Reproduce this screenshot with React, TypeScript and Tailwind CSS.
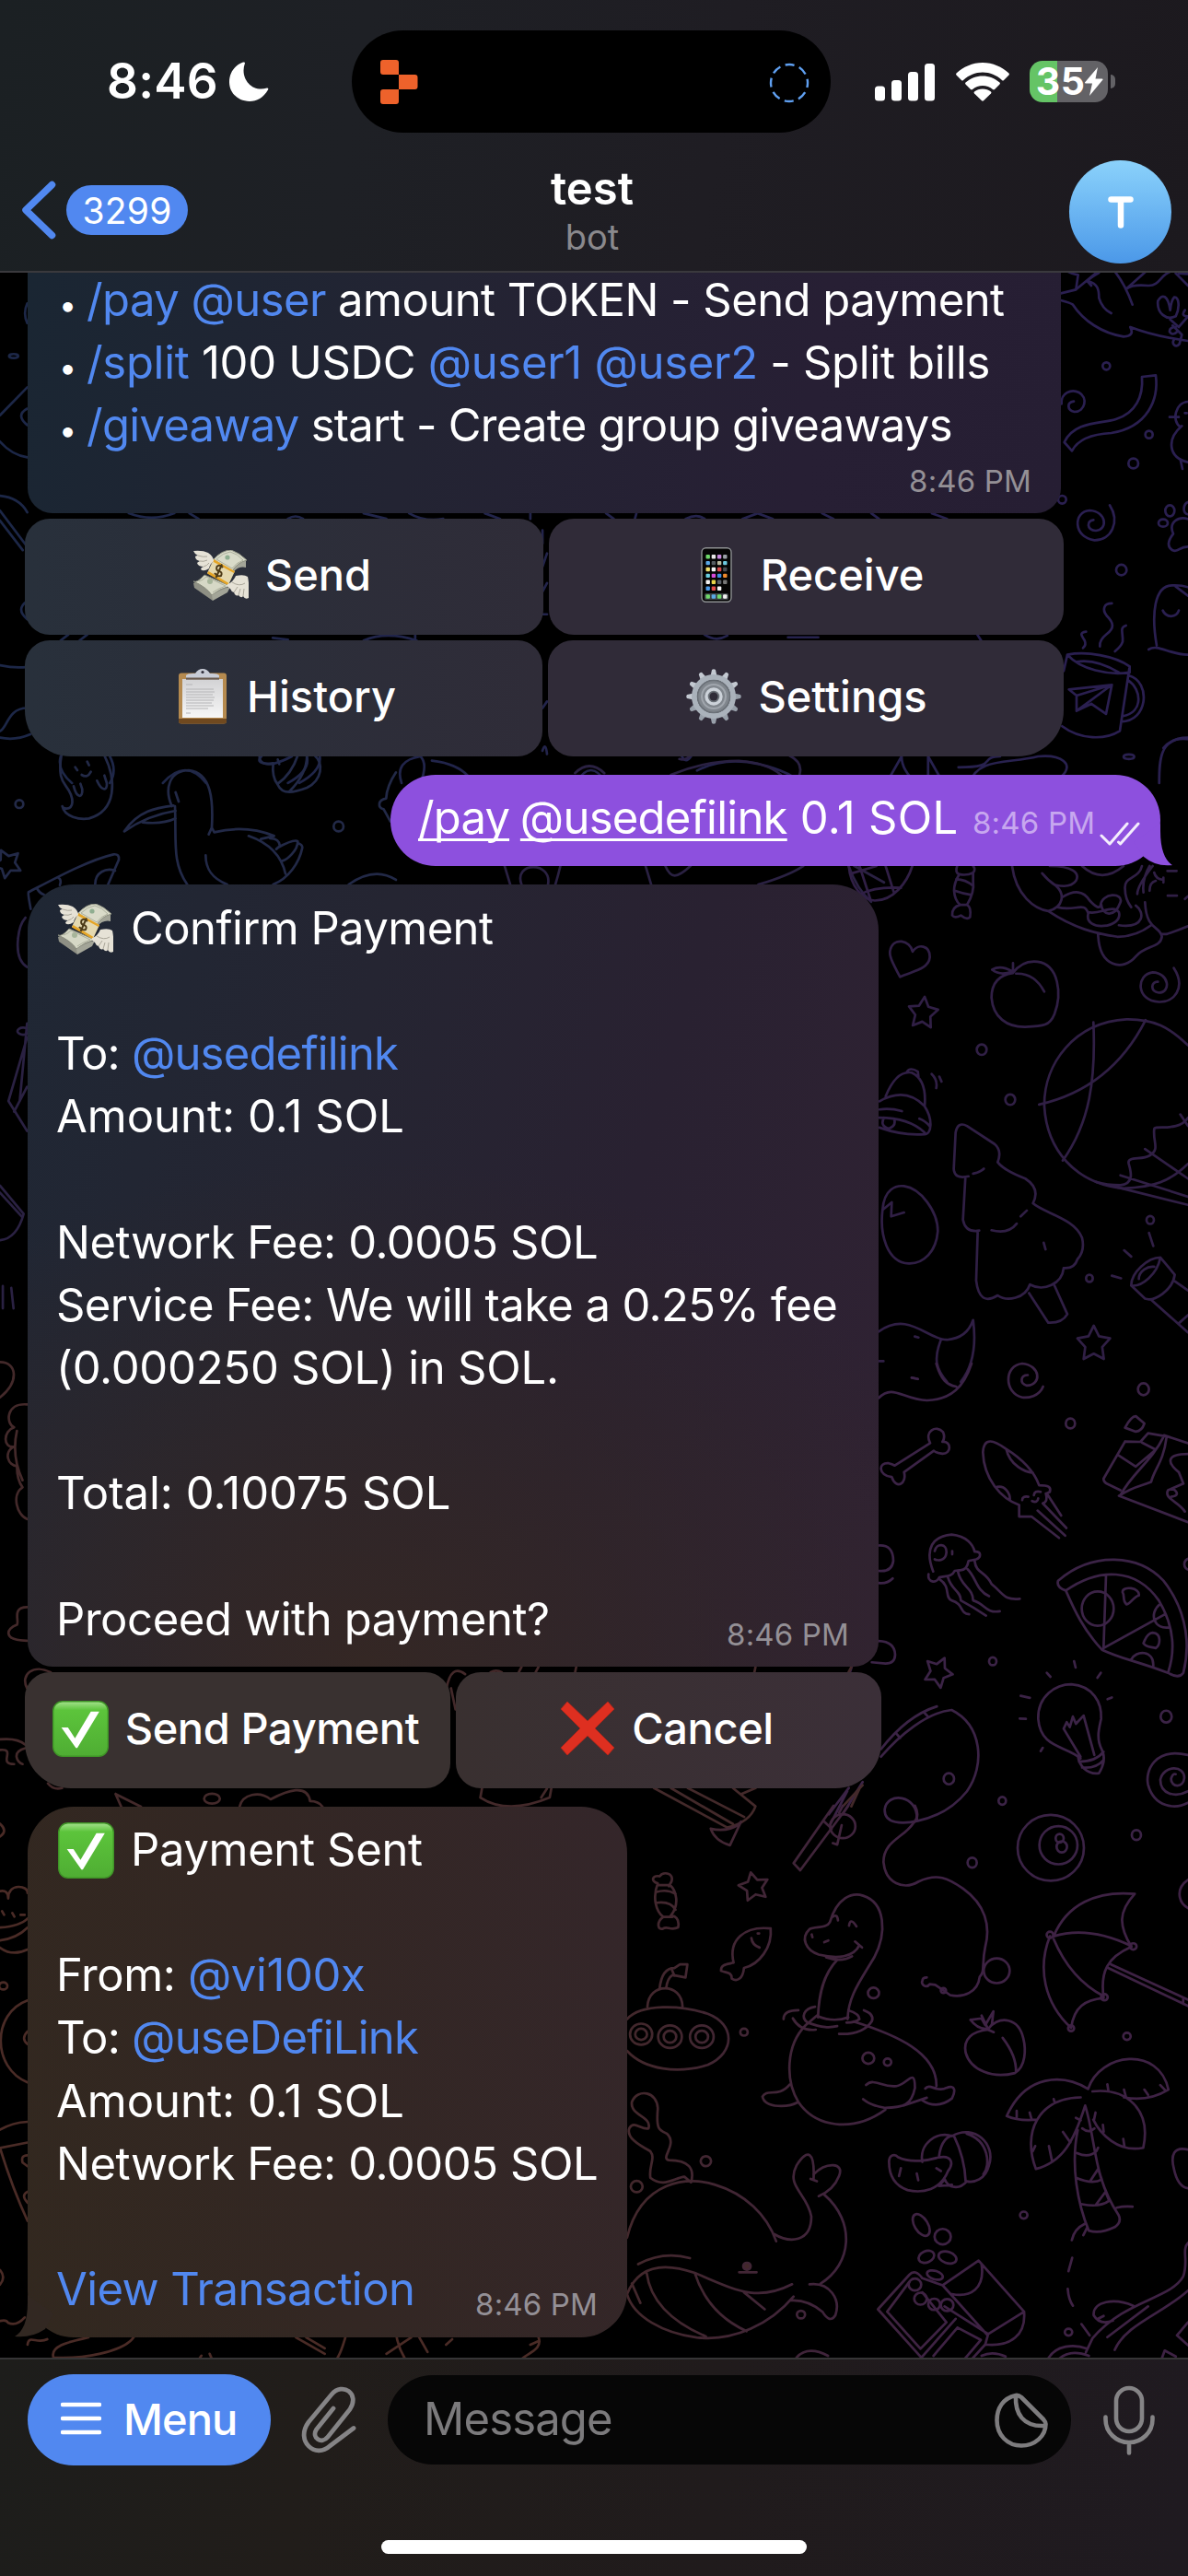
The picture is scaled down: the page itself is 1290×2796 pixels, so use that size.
import type { ReactNode } from 'react';

/* ---------- wallpaper ---------- */

function Star({ x, y, r = 50, turn = 0 }: { x: number; y: number; r?: number; turn?: number }) {
  const points = Array.from({ length: 10 }, (_, i) => {
    const a = ((i * 36 - 90 + turn) * Math.PI) / 180;
    const d = i % 2 ? r * 0.52 : r;
    return `${(x + Math.cos(a) * d).toFixed(1)},${(y + Math.sin(a) * d).toFixed(1)}`;
  });
  return <polygon points={points.join(' ')} />;
}

function Dots({ at }: { at: [number, number, number][] }) {
  return (
    <>
      {at.map(([x, y, r]) => (
        <circle key={`${x}-${y}`} cx={x} cy={y} r={r} />
      ))}
    </>
  );
}

function Wallpaper() {
  return (
    <svg
      className="absolute inset-0 h-full w-full [&_*]:[vector-effect:non-scaling-stroke]"
      viewBox="0 296 1290 2263"
      fill="none"
      strokeWidth="2.7"
      strokeLinecap="round"
      strokeLinejoin="round"
      aria-hidden="true"
    >
      <defs>
        <linearGradient id="warm" gradientUnits="userSpaceOnUse" x1="0" y1="0" x2="900" y2="0">
          <stop offset="0" stopColor="#43282a" />
          <stop offset="1" stopColor="#3e2244" />
        </linearGradient>
        <linearGradient id="cool" gradientUnits="userSpaceOnUse" x1="0" y1="0" x2="1568" y2="0">
          <stop offset="0" stopColor="#1c2747" />
          <stop offset="1" stopColor="#2a2050" />
        </linearGradient>
      </defs>

      {/* top right: leaves, ribbon, spiral, mug */}
      <g transform="translate(1130 290) scale(.3333)" stroke="#2a1f50">
        <path d="M66 85L115 73L185 15M85 12Q100 22 122 25L115 73M155 45C185 55 190 70 190 100Q200 135 230 150M240 12Q275 55 299 122M345 12L280 70Q300 55 350 60C390 62 390 20 430 12M440 20L480 60M450 20L480 22M66 108Q95 115 105 122C140 175 200 215 270 226C300 225 300 210 292 195Q370 225 480 240M190 18Q160 35 152 45L165 60" />
        <path d="M422 140C415 90 395 85 382 110C378 150 410 175 440 160C455 130 450 95 435 98Q425 110 422 140M422 170L450 195L480 160M470 140Q455 160 480 160M440 195Q420 195 420 210Q430 225 445 210M435 235C425 250 440 265 452 250L460 220L430 190" />
        <path d="M330 357L375 352C385 430 350 520 230 540Q130 545 102 598L77 570C110 500 200 510 245 495C310 475 335 420 330 357Z" />
        <path d="M68 445C65 410 100 395 125 408C155 425 145 470 110 471C85 465 85 440 108 437" />
        <path d="M225 775C260 830 230 890 175 889C105 880 105 795 160 792C215 795 220 855 180 858C148 855 150 825 172 823" />
        <path d="M455 520C425 500 440 440 480 438M460 517C410 560 415 620 480 635M420 488H450M455 625L462 657M470 475H476" />
        <path d="M480 910C450 910 450 930 430 922C410 910 415 890 432 868C415 830 450 810 480 820M480 805C460 800 465 770 480 765" />
        <ellipse cx="421" cy="793" rx="15" ry="18" />
        <ellipse cx="399" cy="833" rx="15" ry="12" />
        <path d="M378 1232C360 1130 370 1035 430 1036Q460 1035 480 1042M440 1040L480 1070M352 1245C380 1225 420 1262 480 1262M398 1118Q405 1135 425 1137Q445 1135 450 1118" />
        <path d="M232 1095C205 1095 200 1115 215 1135C240 1160 240 1175 215 1195Q190 1215 193 1235M278 1167C255 1175 270 1190 267 1220Q262 1235 242 1251M148 1187C125 1190 133 1200 143 1215Q150 1230 138 1240" />
        <path d="M87 1262C150 1250 240 1265 290 1300L258 1510C210 1540 130 1540 70 1495M87 1262L75 1315M87 1262C130 1310 220 1330 288 1320M118 1285Q180 1275 255 1320M290 1300V1320M288 1330C360 1350 350 1480 262 1480M285 1345C330 1375 335 1450 268 1462" />
        <path d="M92 1375L232 1360L213 1455L165 1422L117 1445V1395ZM117 1395L232 1360L117 1445L165 1422" />
        <path d="M400 1566Q430 1530 480 1537" />
        <Dots at={[[214, 322, 12], [353, 545, 12], [302, 639, 16], [263, 986, 17], [70, 757, 13]]} />
      </g>

      {/* cool left side, visible around the first bubble and its buttons */}
      <g transform="translate(0 290) scale(.8227 .3571)" stroke="url(#cool)">
        <path d="M36 365L0 450M36 430Q20 450 36 480M0 530Q15 570 36 578M0 695Q25 700 36 745M0 740L36 850M0 770L30 860M36 1015Q20 1040 36 1070M0 1210Q20 1220 36 1215M36 1340C10 1340 10 1400 0 1410M0 1430Q20 1440 40 1420M36 110Q30 140 36 170" />
        <path d="M170 748Q200 775 230 748M250 748L262 765M380 765Q390 750 400 765M480 748L510 765M540 748Q560 775 585 765M640 748L660 765M700 748V765M800 748L810 765M840 748L838 765M905 765Q920 748 930 765M980 765L1000 748L1020 765M1085 748L1100 765M1150 748L1160 765M1230 748L1250 765" />
        <path d="M80 1135L90 1117M105 1135L115 1117M360 1127L380 1132M480 1135Q510 1105 550 1135M548 1117V1135M930 1117Q945 1140 960 1120M1040 1125H1080M1290 1117L1295 1135M716 800V840M716 910L722 870M715 990L722 960M716 1055H722M716 1340L722 1320M716 1470Q720 1440 722 1480" />
        <path d="M80 1487Q75 1530 95 1568M145 1487Q155 1530 145 1568M215 1568Q245 1490 272 1568M345 1487Q335 1510 360 1510Q375 1500 385 1487M380 1568Q410 1530 405 1487M422 1487Q425 1530 395 1568M530 1568Q520 1500 555 1487Q565 1510 555 1568M570 1500Q610 1510 625 1568M760 1568Q780 1490 800 1568M900 1487Q905 1510 912 1487M920 1530Q970 1470 1040 1540L1060 1568M1170 1568L1190 1487Q1190 1530 1210 1568M1225 1568V1487L1245 1568M1265 1520C1320 1520 1290 1490 1320 1487M1280 1568C1290 1490 1330 1510 1370 1487C1400 1480 1420 1510 1400 1550M1568 1430C1530 1430 1530 1500 1530 1568" />
        <Dots at={[[18, 270, 6], [1490, 1488, 7]]} />
      </g>

      {/* pelican, ghost, pizza slice */}
      <g transform="translate(0 820) scale(.3333)" stroke="#222947">
        <path d="M200 0C190 60 200 80 215 100C245 140 240 175 215 173Q203 170 203 165C210 200 260 210 290 205C380 180 380 80 340 0M245 38L252 48M284 20L290 32M266 63Q285 75 296 53M240 100C250 140 270 140 268 110L262 92M316 82C330 115 350 118 348 90L340 65" />
        <path d="M560 165C535 110 550 50 615 48C690 55 695 150 690 235L680 257M690 235L698 250Q800 225 893 262L850 272M570 165C575 280 560 350 610 420M405 247C450 180 510 170 565 163M405 247Q480 195 572 180M465 218Q530 225 572 205M572 120L582 150M670 325C670 370 690 400 740 420M810 262C890 290 920 340 930 385M880 270Q910 270 912 295L900 305M905 300Q960 270 970 280C970 310 935 340 920 343M970 285Q985 290 985 300C975 350 940 400 890 420" />
        <path d="M845 0C845 30 870 30 890 25Q885 70 905 95C920 130 960 120 1000 105C1050 80 1055 25 1025 0M905 92Q950 60 970 0M943 117Q1000 60 1000 0M905 13L910 28M930 0H938" />
        <path d="M100 500C95 470 90 450 93 445C180 400 290 340 370 322Q390 320 387 340L352 420M120 432Q130 450 143 453M190 398Q202 405 195 422M310 420C310 380 345 365 375 375" />
        <path d="M1136 420Q1220 360 1290 405M1290 55Q1260 100 1258 140C1230 145 1230 170 1250 175L1272 215" />
        <Star x={24} y={352} r={48} turn={-170} />
        <Dots at={[[63, 158, 13], [1103, 231, 16]]} />
      </g>

      {/* between the outgoing and the confirm bubble */}
      <g transform="translate(0 820) scale(.6122 .3827)" stroke="#2a2142">
        <path d="M895 313L905 366M994 313Q990 340 985 366M925 366C910 300 980 300 972 366M1145 313L1155 366M1180 313C1190 350 1200 350 1225 313M1345 366Q1400 340 1425 313M1505 313Q1520 380 1545 415M1515 313L1568 360M1020 50Q1045 10 1072 50M1190 55Q1250 15 1310 15Q1360 20 1385 55M1400 0Q1425 20 1418 55M1205 10Q1215 15 1225 0M48 600Q28 580 32 520Q34 480 45 460M48 800L15 980L48 1065M48 760L35 980M25 1010L48 940M0 1220L42 1300Q30 1370 0 1375M0 1240L40 1310M5 1505V1568M20 1510L24 1568" />
        <Dots at={[[41, 782, 10]]} />
      </g>

      {/* heart, peach, ball, tree, flashlight */}
      <g transform="translate(900 940) scale(.3333 .3571)" stroke="#301f45">
        <path d="M65 0C70 60 110 105 150 105C210 105 255 50 272 0M75 22Q120 10 155 0M100 0L135 100M185 0L212 80M105 85Q150 62 235 66" />
        <path d="M418 0Q410 20 425 25Q408 50 408 75Q410 105 428 118Q400 125 402 150Q410 160 430 150Q450 165 460 155Q465 125 450 118Q475 80 470 45Q470 30 470 20Q480 10 470 0M425 25Q450 30 470 20M415 40Q445 40 470 60M410 75Q440 85 465 88M428 118H450" />
        <path d="M232 337C205 290 195 270 200 255C210 215 265 225 273 260C290 235 330 240 329 277C325 315 270 320 232 337Z" />
        <path d="M600 325C560 330 530 350 530 400C535 460 580 490 640 489C700 487 720 485 735 450C760 390 750 300 680 291C645 287 620 300 600 325M532 315Q560 300 597 320Q560 335 532 315M600 295V325M610 327Q670 325 702 382" />
        <path d="M597 0C610 90 670 130 715 137C765 125 770 85 740 60Q715 45 695 22M720 0C790 0 820 20 805 45C790 65 760 62 740 58M745 125C800 140 835 105 845 145C830 200 960 190 945 140C925 115 880 150 845 140M715 137C800 190 870 205 940 215Q1000 215 1050 180M760 95Q820 60 850 105Q880 135 885 120C890 80 960 80 950 110C930 160 890 150 887 115M825 0Q890 55 960 0M1020 0C1010 40 960 30 965 70Q965 100 985 125M1000 120C1030 140 1030 190 945 180M877 205C880 310 960 320 1000 275C1030 240 1080 250 1085 215C1080 180 1035 200 1030 110M1055 0Q1005 60 1005 85M1025 80Q1020 40 1045 0M1100 207Q1140 195 1170 183M1085 207H1100M1060 20Q1065 40 1090 42M1090 35V50M1045 75Q1045 50 1065 45M1103 15H1133M1104 90H1134M1160 100L1170 92" />
        <path d="M1124 310C1165 370 1125 415 1075 413C1000 410 1000 330 1055 323C1110 325 1115 385 1075 385C1045 380 1050 350 1072 352" />
        <path d="M1170 545C1110 490 1060 465 970 466C800 475 700 600 702 730C710 860 800 965 960 980C1060 975 1110 960 1170 905M862 475C870 650 850 780 762 895M1032 468C960 600 850 690 685 725" />
        <path d="M1170 765C1140 810 1060 785 1060 800C1055 840 1080 860 1045 880C1020 895 970 880 977 905C985 930 995 965 950 970Q905 970 870 960L1170 1030M950 940L1170 1005M1030 860L1170 950M1145 755L1170 790" />
        <path d="M165 715Q250 670 312 730C340 770 335 815 312 815Q240 820 165 795M185 700Q220 620 270 628Q320 650 312 730M255 625Q265 610 290 625L292 640M165 740Q200 735 238 745M165 765Q260 765 312 810M295 768Q315 775 328 790M180 765Q165 790 195 798Q220 790 213 770M335 632Q355 650 350 675M360 640L367 655" />
        <path d="M175 1045C180 980 220 970 245 973C300 980 355 1050 355 1110C350 1170 310 1210 260 1208C190 1205 165 1120 175 1045L205 1022L203 1065L245 1053" />
        <path d="M455 943C420 950 408 940 407 920L413 810Q420 775 450 790L540 845Q565 865 550 900Q570 925 640 950Q690 980 665 1025C700 1055 800 1070 825 1130Q835 1170 810 1195Q800 1225 765 1222C760 1270 700 1295 655 1272C640 1315 580 1325 550 1305Q490 1340 480 1260L485 1110M445 945L437 1075Q445 1115 490 1108M530 1107Q585 1120 612 1087M625 1065L645 1047M470 935Q495 930 505 920M652 1298L715 1388Q760 1390 777 1362L735 1275M700 1145L706 1165" />
        <path d="M162 1415C260 1350 320 1440 385 1440Q450 1435 470 1380C480 1450 470 1520 430 1568M365 1440C340 1500 350 1530 385 1568M280 1430L292 1433M165 1505H178M270 1555L290 1559" />
        <path d="M985 1275C985 1235 1040 1190 1080 1190L1127 1242C1120 1290 1060 1325 1030 1315ZM1080 1190C1070 1240 1020 1280 985 1275M1010 1255C1010 1230 1040 1215 1060 1218M1050 1318L1170 1418M1127 1262L1170 1290M1140 1390L1170 1365M1043 1115L1057 1155M962 1168L985 1187M922 1245L952 1253" />
        <Star x={307} y={447} turn={6} />
        <Star x={863} y={1453} r={56} />
        <Dots at={[[498, 558, 16], [591, 710, 16], [1047, 1076, 12], [849, 1253, 11]]} />
      </g>

      {/* bone, squid, chocolate, jellyfish, pizza, bulb, billiard ball */}
      <g transform="translate(900 1480) scale(.3333 .3571)" stroke="#3b2346">
        <path d="M162 105C210 60 240 110 320 112C400 110 440 70 465 0M350 0C365 50 385 65 415 70M270 43L290 47" />
        <path d="M698 70C685 100 650 105 630 103C570 90 570 5 630 0C690 5 695 65 645 67C620 60 625 35 648 35" />
        <path d="M215 310L330 242C310 205 350 185 372 208Q380 225 370 238C400 235 400 275 370 274Q350 272 342 265L245 330C255 365 220 385 205 345C160 340 160 300 195 303Q205 305 215 310Z" />
        <path d="M502 270C505 220 540 235 575 258C630 290 670 330 685 370C715 370 725 375 720 390L710 395L757 462M502 270C505 350 560 410 620 430V465H660L750 530M680 447L770 523M697 425L774 500M707 395Q715 420 697 425M578 260C590 310 640 330 665 332M548 375C575 370 590 395 590 412M630 415Q630 402 650 405M668 400Q670 385 690 390M662 418Q680 425 682 410" />
        <path d="M965 237L895 350Q895 360 905 365L950 385M965 237L1015 238L1040 212L1092 220M945 280L1000 313L1065 262L1020 240M1092 220C1050 300 990 330 950 400M1100 225C1090 300 1060 320 1050 360C1010 375 1000 370 945 402L1170 482M1092 218L1170 242M1170 275C1100 275 1100 300 1140 330L1155 365L1105 385C1090 410 1140 420 1160 450M1120 380Q1150 400 1115 405M965 195Q985 160 1000 160L1028 182Q1020 205 1000 207Z" />
        <path d="M340 632C310 560 340 525 400 520C450 525 470 550 475 572C500 570 495 590 480 595L455 600Q450 630 425 628L410 630C400 650 380 645 360 650C350 670 320 665 325 640M345 570C350 545 385 545 383 575C380 600 355 600 345 595M402 570V580M360 655C400 680 375 710 400 720C440 730 425 760 457 762M388 650C400 690 430 690 430 720Q470 740 512 766M420 630C430 680 470 680 470 720C510 730 510 760 557 753M452 625C480 650 480 690 522 707M475 600C480 640 510 630 530 670C570 700 570 720 622 715" />
        <path d="M747 660C860 570 1010 580 1090 660C1150 730 1185 830 1155 940Q1140 960 1105 940C990 900 960 900 890 870C830 810 800 750 772 690Q740 680 747 660ZM772 690C880 620 1000 620 1075 720Q1145 830 1105 940M903 645L895 865L1095 762M1080 730C1040 760 1060 810 1110 802M985 900C1000 870 1060 870 1057 920M957 695C955 675 1015 680 1010 705C990 710 985 730 970 732C955 720 965 705 957 695M1025 850C1030 840 1035 820 1055 818C1085 820 1080 855 1065 865C1050 860 1035 865 1025 850" />
        <circle cx="876" cy="745" r="52" />
        <path d="M820 1200C770 1160 690 1170 682 1080C680 1010 740 975 790 975C860 980 890 1030 887 1080C880 1110 870 1140 890 1175C905 1205 890 1230 880 1245C840 1250 815 1220 812 1195M765 1110L820 1195M765 1110L775 1090L785 1105L795 1073L805 1095L830 1070L865 1190M815 1210Q870 1210 895 1180M825 1228Q870 1232 895 1205M625 1010L655 1016M622 1079L642 1080M710 940L722 952M799 905L804 924M886 940L875 955M908 1020L922 1015M697 1168L690 1178" />
        <path d="M162 553Q210 550 210 600Q205 635 162 630M162 667Q190 670 208 653M162 843Q215 845 216 885Q215 912 185 912L140 908M70 935L75 920" />
        <path d="M170 1172C230 1100 290 1060 352 1042M170 1195C230 1130 320 1060 400 1053C500 1100 510 1220 450 1300Q390 1370 290 1390C240 1400 180 1400 182 1355C190 1300 290 1310 287 1385M310 1060L322 1072M220 1125L232 1138M65 1290L0 1370M110 1272L45 1370M60 1300L5 1400" />
        <path d="M1170 1190C1060 1165 1030 1240 1040 1280C1060 1350 1130 1355 1170 1335M1170 1300C1130 1320 1080 1310 1080 1265C1090 1220 1160 1220 1158 1260C1155 1290 1115 1290 1115 1262Q1120 1245 1130 1248" />
        <ellipse cx="723" cy="1472" rx="108" ry="100" />
        <ellipse cx="748" cy="1464" rx="62" ry="58" />
        <circle cx="752" cy="1443" r="13" />
        <circle cx="759" cy="1469" r="17" />
        <Star x={356} y={938} r={48} turn={170} />
        <Dots at={[[1025, 78, 18], [787, 182, 15], [534, 905, 12], [1099, 1073, 18], [391, 1262, 17], [565, 1329, 12], [1002, 1433, 15], [467, 1517, 15], [1175, 610, 17]]} />
      </g>

      {/* edges around the confirm buttons */}
      <g transform="translate(0 1400) scale(.6122 .3827)" stroke="#43292a">
        <path d="M0 205C30 205 35 260 0 305M48 325C10 320 10 380 25 390C5 400 5 450 25 445C5 460 15 500 30 500Q30 540 40 560C20 580 30 640 48 650M30 400Q20 470 40 540M48 900C20 900 35 940 30 950C10 960 5 995 48 995M48 1130C35 1090 60 1060 90 1085M45 1300C20 1310 30 1340 40 1345M0 1275Q30 1270 45 1290M0 1305C30 1300 -5 1345 25 1345M85 1400Q95 1420 110 1413" />
        <path d="M205 1430L215 1466M205 1430L250 1466M425 1466C430 1430 460 1420 480 1445C510 1420 545 1400 550 1450Q565 1450 572 1466M852 1440L855 1413M852 1440Q900 1490 975 1440L978 1413M970 1415L960 1440M792 1130Q800 1060 825 1090M800 1130L808 1190M870 1085Q880 1075 890 1085M920 1085L925 1070M950 1085L955 1070M1020 1085L1022 1070M1340 1070L1338 1085M1505 1085L1510 1070" />
        <path d="M1160 1413L1290 1525Q1330 1510 1340 1465L1300 1413M1190 1413L1300 1515M1220 1413L1320 1495M1340 1413L1315 1430M1530 1405L1495 1465M1525 1413L1510 1465" />
        <Dots at={[[376, 1443, 14]]} />
      </g>

      {/* left edge beside the last bubble */}
      <g transform="translate(0 1940) scale(.4464 .3954)" stroke="#4a2b26">
        <path d="M0 100Q20 120 0 135M0 285Q20 280 20 305C20 260 70 270 67 290M0 385Q50 380 67 360M0 420Q40 415 67 385M0 440Q30 465 67 445M5 340L10 350M30 345L35 355M50 350H60M67 585C-20 620 -20 770 67 810M67 670Q50 690 67 705M0 940Q30 920 67 918M67 975L0 990Q30 1100 67 1190M67 1010Q50 1010 55 1030L67 1040M67 1110Q50 1120 67 1140M0 1325Q15 1345 0 1365M0 1465Q15 1460 20 1470Q40 1480 60 1455M67 1530C70 1500 90 1530 115 1515M130 1565C120 1530 180 1520 215 1510M130 1565C200 1570 300 1550 325 1510M485 1568L490 1560M515 1568L510 1555M720 1510L790 1555M745 1510L790 1540M840 1510Q830 1550 820 1568M965 1510Q970 1540 985 1568M1000 1510L940 1555M1020 1510L1040 1550M1085 1530L1100 1515M1310 1510C1320 1540 1290 1550 1270 1568M1290 1530L1310 1520" />
        <Dots at={[[8, 545, 10]]} />
      </g>

      {/* dinosaur, submarine, whale, palm, umbrella */}
      <g transform="translate(660 1960) scale(.4018 .3827)" stroke="url(#warm)">
        <path d="M278 65C320 75 350 60 360 45L330 112Q290 100 278 65" />
        <path d="M135 220C115 215 120 195 140 200C150 185 180 190 172 215L165 228M135 220C120 260 130 300 150 315C130 330 135 355 150 348C160 340 170 355 190 345C195 320 180 310 170 312C195 280 185 240 168 225L135 225M130 245Q160 235 183 250M132 275Q170 270 183 295M150 315H175" />
        <path d="M340 445C325 380 370 340 440 348C445 400 410 450 368 460C365 490 350 500 335 490C335 470 320 475 306 468C305 450 320 450 340 445M388 375Q390 395 410 402M405 362H409" />
        <path d="M52 605C90 560 200 565 270 590C345 620 345 700 270 735C190 760 100 750 52 695M107 570C110 500 200 500 202 570M140 518C145 470 165 460 180 460L195 450L215 450L210 487L175 480Q160 490 158 518M172 462L180 482" />
        <circle cx="90" cy="648" r="30" /><circle cx="90" cy="648" r="16" />
        <circle cx="168" cy="655" r="32" /><circle cx="168" cy="655" r="17" />
        <circle cx="254" cy="655" r="32" /><circle cx="254" cy="655" r="17" />
        <path d="M600 330C620 260 660 245 690 255C750 275 755 360 720 430C680 500 650 540 648 605M600 330C590 350 560 340 545 350C520 375 535 410 570 422C620 435 665 430 680 395M668 385L687 402M590 430Q630 445 660 427M620 437C580 480 570 540 568 600M551 365L553 373M585 387L596 382M608 315Q620 305 622 325M652 340Q655 315 672 342" />
        <path d="M568 597Q610 615 650 600M560 570C530 575 520 600 540 615C580 630 600 630 620 625M650 580Q680 590 680 605Q670 615 645 615M515 580Q475 580 475 605M500 603Q520 640 562 635M692 580Q720 590 714 610Q690 650 625 647" />
        <path d="M535 622C480 680 480 780 515 840C560 910 660 930 750 862M535 622L565 595M665 612C780 650 890 700 888 795M492 790C460 830 430 800 418 825C425 860 490 855 515 840M698 792C720 770 740 800 780 795C810 790 830 740 830 800C820 850 800 855 750 857Q710 850 690 832M858 802C870 785 890 815 915 800C940 790 940 810 930 830C900 855 870 850 850 835M800 850L862 828" />
        <circle cx="704" cy="716" r="16" /><circle cx="756" cy="727" r="10" />
        <path d="M110 915C120 880 60 880 65 840C80 800 135 810 135 860C130 920 140 920 160 930C190 960 140 1000 165 1005C220 1005 235 1030 225 1068L207 1052C180 1055 150 1085 115 1055C110 1020 130 1000 115 980C80 960 50 940 58 915C70 890 90 920 110 915" />
        <path d="M52 1225C90 1060 220 1050 290 1075C370 1100 430 1160 455 1235M450 1215C490 1240 550 1240 550 1165C540 1100 480 1080 510 1020C540 970 560 980 556 1060M548 1058L565 1065M556 1045C590 1010 640 1010 625 1050Q610 1090 570 1107M585 1103C670 1180 660 1300 575 1355M545 1357C600 1350 630 1400 615 1445Q600 1470 580 1435Q540 1400 495 1403M502 1392C440 1470 340 1520 240 1508C150 1495 70 1450 52 1385C80 1310 140 1290 235 1325C340 1370 400 1410 498 1357M82 1300Q150 1262 222 1283M105 1325Q120 1440 265 1505M235 1325Q270 1440 375 1490M65 1355L88 1410M368 1380L424 1428M355 1323H402" />
        <circle cx="376" cy="1306" r="10" fill="#43282a" />
        <path d="M610 0L502 163L520 183L650 0M585 45L605 65M635 0L625 20M632 55L620 110L608 106" />
        <circle cx="635" cy="58" r="34" />
        <path d="M830 0Q845 30 825 50C800 90 745 100 745 160C750 220 800 240 840 215C890 190 920 205 960 235C1020 280 1035 340 1020 400C1010 450 1020 470 1005 485C1000 530 960 545 925 537L905 522L885 508L870 506C860 520 845 505 850 497Q850 487 862 487" />
        <path d="M1205 370C1240 280 1320 240 1424 250C1380 300 1380 340 1415 400C1350 430 1330 470 1340 545C1290 550 1260 570 1252 630C1180 560 1160 460 1195 370M1205 370Q1300 340 1415 398M1205 378Q1250 490 1340 540M1360 450L1568 550M1352 460L1568 568M1555 548V562" />
        <path d="M1027 635C985 640 960 660 967 700C980 750 1040 775 1100 758C1130 740 1130 690 1123 660C1110 600 1060 595 1030 630M1067 658Q1105 710 1103 755M980 607L1010 603L1020 622L1042 583L1038 620L1027 635L1043 642M980 607Q1000 635 1025 632M1010 595L1027 632" />
        <path d="M1298 803C1230 760 1130 760 1078 880Q1110 895 1160 890M1298 803C1330 700 1490 680 1515 805Q1460 840 1395 827M1310 810C1400 800 1470 860 1447 970C1380 985 1330 930 1312 890M1278 827C1160 830 1120 930 1157 1030C1230 1010 1260 950 1290 850C1320 950 1310 1050 1380 1160Q1390 1180 1370 1195Q1330 1215 1300 1205C1270 1130 1250 1020 1270 920M1282 915Q1300 930 1315 915M1268 985Q1300 1000 1320 980L1325 970M1265 1055Q1310 1075 1335 1060L1325 1030L1305 1062M1282 1130Q1330 1140 1355 1120L1345 1095L1320 1130M1375 1140Q1395 1135 1418 1137M1290 1185Q1260 1200 1254 1232M1296 1195L1285 1218M1255 1282L1245 1320M1243 1370Q1245 1400 1257 1418M1280 1470L1302 1502M1105 865V885M1140 870L1145 888M1205 832L1208 842M1155 965L1148 980M1192 965L1200 1005M1230 925L1250 955M1265 885L1278 892M1318 870L1314 890M1338 905L1340 925M1393 945L1396 965M1350 790L1353 810M1395 805L1400 825M1450 805L1460 820M1493 792L1505 805" />
        <path d="M850 1010C840 960 890 920 930 937C990 900 1050 960 1030 1020C1020 1060 990 1070 970 1065C950 1090 920 1085 910 1058M895 995C900 950 920 935 935 935Q965 1000 967 1065M970 930C1030 950 1035 1020 1015 1045M760 1010C760 990 775 985 785 997C820 1015 870 1005 895 997C930 990 935 1015 920 1035C900 1090 850 1100 810 1090C770 1075 760 1040 760 1010M792 1028L787 1050M835 1043L839 1062M888 1028L900 1036M910 1060L895 1078L930 1075" />
        <ellipse cx="847" cy="1189" rx="18" ry="34" transform="rotate(-30 847 1189)" />
        <circle cx="905" cy="1222" r="22" />
        <ellipse cx="861" cy="1279" rx="22" ry="16" transform="rotate(-25 861 1279)" />
        <ellipse cx="918" cy="1281" rx="25" ry="16" transform="rotate(20 918 1281)" />
        <ellipse cx="884" cy="1331" rx="22" ry="12" transform="rotate(18 884 1331)" />
        <path d="M815 1330L730 1428L850 1568M815 1350L755 1435L845 1540L915 1465L850 1380M815 1330Q830 1312 850 1340L905 1360L1002 1290L1125 1435C1130 1500 1090 1535 1020 1528M1125 1435L1025 1500L905 1360M1010 1300C1020 1370 980 1395 930 1385M910 1420L1028 1498L1020 1528L985 1568M940 1455L845 1568M945 1480L880 1560M945 1480L1008 1515L965 1568" />
        <circle cx="830" cy="1358" r="17" /><circle cx="845" cy="1398" r="17" />
        <circle cx="882" cy="1414" r="16" /><circle cx="917" cy="1416" r="17" />
        <path d="M1568 1240C1550 1260 1570 1290 1555 1335C1520 1400 1400 1400 1310 1510L1292 1550M1568 1375C1500 1440 1400 1470 1370 1543M1460 1420L1350 1507M1420 1418C1370 1395 1310 1405 1313 1445Q1330 1475 1365 1460M1325 1455L1340 1447M1568 1465L1538 1502L1568 1530M1190 1568C1210 1530 1260 1525 1295 1540M1220 1568Q1250 1540 1300 1560M1010 1560Q1040 1545 1075 1562M510 1565Q540 1530 595 1560M1568 210Q1540 230 1546 260Q1550 280 1568 290M1568 975C1530 965 1520 990 1530 1030Q1540 1080 1568 1085M1497 1568L1505 1545L1535 1562" />
        <Star x={395} y={230} r={42} turn={-12} />
        <Dots at={[[718, 531, 15], [368, 642, 10], [1403, 654, 10], [265, 1008, 14], [78, 1080, 16], [522, 1443, 11], [1124, 1161, 10], [1245, 1493, 10], [1195, 366, 9], [1420, 399, 9], [1342, 543, 9], [1252, 631, 8], [907, 524, 7]]} />
        <circle cx="1051" cy="468" r="35" />
      </g>
    </svg>
  );
}

/* ---------- emoji ---------- */

function MoneyWings() {
  return (
    <svg className="h-[55px] w-[60px]" viewBox="0 0 60 55" role="img" aria-label="money with wings">
      <path d="M0 36L13 30L39 42L22 50L21 55L1 41Z" fill="#8e8f84" />
      <path d="M0 34Q4 36 12 27L40 39Q28 42 20 49Q14 40 0 34Z" fill="#d6d8c6" stroke="#888b7c" strokeWidth="1" />
      <path d="M21 55L20 49Q29 43 40 40L37 46Z" fill="#a3a598" />
      <path d="M23 12Q30 1 40 0L57 11V19Q49 17 42 25Z" fill="#a3a598" />
      <path d="M22 10Q31 0 41 0Q50 3 58 11Q47 14 42 23Z" fill="#d9dbc9" stroke="#8b8e7f" strokeWidth="1" />
      <path d="M25 10Q32 3 40 2Q48 4 54 11Q46 14 42 20Z" fill="none" stroke="#aeb19e" strokeWidth="1" />
      <circle cx="37" cy="8" r="2.6" fill="#8fae90" />
      <circle cx="18" cy="34" r="3" fill="#a7b59a" />
      <path d="M6 34Q10 33 14 29L35 39Q26 42 21 46" fill="none" stroke="#aeb19e" strokeWidth="1" />
      <path d="M22 10L45 23L38 38L15 25Z" fill="#e4d9b0" />
      <path d="M22 10L45 23L44 25L21 12.500ZM16.500 23L38.500 36L38 38.500L15 25.500Z" fill="#e5a526" />
      <path d="M32 19Q28 15 25.500 18Q24 22 28 23Q32 24 30 28Q26 29 23 25M31 15.500L24.500 30" fill="none" stroke="#4c3a17" strokeWidth="2" />
      <path d="M0 1Q10 0 16 3Q22 7 22 12Q18 15 17 20Q11 24 8 21Q8 19 11 18Q5 18 4 14Q5 13 7 12Q2 11 2 7Q3 6 5 6Q1 4 0 1Z" fill="#e6e2d6" />
      <path d="M5 6Q11 8 15 7M7 12Q11 13 15 11M11 18Q15 17 17 14" fill="none" stroke="#aaa699" strokeWidth="1" />
      <path d="M46 28Q55 26 59 29Q61 38 60 52Q56 54 54 50Q52 53 49 49Q46 51 44 46Q41 45 40 42Q36 40 37 37Q43 35 46 28Z" fill="#e6e2d6" />
      <path d="M44 46L48 40M49 49L51 42M54 50L55 42M42 35Q50 40 56 36" fill="none" stroke="#aaa699" strokeWidth="1" />
    </svg>
  );
}

const appColors = [
  '#6fd86a', '#e8e8e8', '#c98be0', '#9aa0a6', '#5aa9e6', '#555b60', '#b9b9a0', '#6cc9e0',
  '#f0e06a', '#f2f2f2', '#d84a4a', '#4a4f55', '#6ad0e0', '#d84ad8', '#3f8ee0', '#f08a2c',
  '#f2f2f2', '#e8d44a', '#5a5f66', '#777777', '#4a9ae8', '#e04a4a', '#f4f4f4',
];

function Phone() {
  return (
    <svg className="h-[60px] w-[60px]" viewBox="0 0 60 60" role="img" aria-label="mobile phone">
      <rect x="14" y=".8" width="32" height="58.400" rx="4.500" fill="#050505" stroke="#8d9092" strokeWidth="1.400" />
      {appColors.map((fill, i) => (
        <rect key={i} x={18.5 + (i % 4) * 6.2} y={8 + Math.floor(i / 4) * 6.9} width="4.400" height="4.400" rx="1" fill={fill} />
      ))}
      <rect x="17" y="50" width="26" height="7" rx="1.500" fill="#3a4144" />
      {['#6fd86a', '#5aa9e6', '#6fd86a', '#f2f2f2'].map((fill, i) => (
        <rect key={i} x={18.5 + i * 6.2} y="51.300" width="4.400" height="4.400" rx="1" fill={fill} />
      ))}
    </svg>
  );
}

function Clipboard() {
  return (
    <svg className="h-[60px] w-[60px]" viewBox="0 0 60 60" role="img" aria-label="clipboard">
      <defs>
        <linearGradient id="paper" x1="0" y1="0" x2="0" y2="1">
          <stop offset="0" stopColor="#d2d2d4" />
          <stop offset="1" stopColor="#f7f7f7" />
        </linearGradient>
      </defs>
      <rect x="4" y="4.500" width="52" height="55" rx="3" fill="#b58a4f" />
      <path d="M4 54H56V57Q56 59.500 53 59.500H7Q4 59.500 4 57Z" fill="#70491f" />
      <rect x="8" y="11" width="44" height="42" fill="url(#paper)" />
      <path d="M12 17H19M12 22H42M12 25H43M12 28H41M12 31H43M12 34H42M12 37H40M12 40H42M12 43H36M12 48H17" stroke="#b4b4b6" strokeWidth="1" />
      <path d="M12 10V7Q14 4.500 22 5Q25 0 30 0Q35 0 38 5Q46 4.500 48 7V10Z" fill="#c8ccd6" />
      <rect x="12" y="9.500" width="36" height="2.200" fill="#6b5c50" />
      <circle cx="30" cy="3.500" r="1.600" fill="#2e2d39" />
    </svg>
  );
}

function Gear() {
  return (
    <svg className="h-[60px] w-[60px]" viewBox="0 0 60 60" role="img" aria-label="gear">
      {Array.from({ length: 12 }, (_, i) => (
        <path key={i} d="M26.500 8L28 1Q30 -.5 32 1L33.500 8Z" fill={i > 2 && i < 9 ? '#98a0aa' : '#c3c9d1'} transform={`rotate(${i * 30} 30 30)`} />
      ))}
      <circle cx="30" cy="30" r="21" fill="none" stroke="#aab2bb" strokeWidth="6" />
      <circle cx="30" cy="30" r="17.500" fill="#80868d" stroke="#6b7178" strokeWidth="1.500" />
      <circle cx="30" cy="30" r="13" fill="none" stroke="#a0a6ad" strokeWidth="2" />
      <circle cx="30" cy="30" r="8" fill="#6a7077" stroke="#ccd2d9" strokeWidth="3.400" />
      <circle cx="30" cy="30" r="4.500" fill="#2f2c38" />
    </svg>
  );
}

function CheckBox() {
  return (
    <svg className="h-[61px] w-[61px]" viewBox="0 0 60 60" role="img" aria-label="check mark button">
      <defs>
        <linearGradient id="green" x1="0" y1="0" x2="0" y2="1">
          <stop offset="0" stopColor="#a6e28e" />
          <stop offset=".16" stopColor="#5cc43b" />
          <stop offset="1" stopColor="#4fad33" />
        </linearGradient>
      </defs>
      <rect x=".7" y=".7" width="58.600" height="58.600" rx="10" fill="url(#green)" stroke="#3f9427" strokeWidth="1.400" />
      <path d="M9.500 28.500H16.500L24 40L41 11.500H50L26.500 50.500H25Z" fill="#fff" />
    </svg>
  );
}

function CrossMark() {
  return (
    <svg className="h-[60px] w-[60px]" viewBox="0 0 60 60" role="img" aria-label="cross mark">
      <path d="M8 1L30 22L52 1L59 9L38 30L59 51L52 59L30 38L8 59L1 51L22 30L1 9Z" fill="#de2f20" stroke="#b52519" strokeWidth=".8" />
    </svg>
  );
}

/* ---------- header ---------- */

function StatusBar() {
  return (
    <div className="flex h-[177px] items-center">
      <div className="flex w-[382px] items-center gap-[12px] pl-[116px]">
        <span className="text-[53px] leading-none font-semibold tracking-[0.2px]">8:46</span>
        <svg className="h-[43px] w-[43px]" viewBox="0 0 43 43" fill="#fff" aria-hidden="true">
          <path d="M15 .5Q17 0 17 1.500C11 17 24 34 41 28.500Q43 28.500 42 30.500C37 39 30 43 22 43C9 43 0 33.500 0 22C0 12 6 3.500 15 .5Z" />
        </svg>
      </div>
      <div className="flex h-[111px] w-[520px] items-center justify-between rounded-full bg-black pr-[23px] pl-[31px]">
        <svg className="h-[48px] w-[41px]" viewBox="0 0 41 48" fill="#ee622b" aria-hidden="true">
          <path d="M3 0H17Q20 0 20 3V16H3Q0 16 0 13V3Q0 0 3 0ZM20 16H37.500Q40.500 16 40.500 19V29Q40.500 32 37.500 32H20ZM3 32H20V45Q20 48 17 48H3Q0 48 0 45V35Q0 32 3 32Z" />
        </svg>
        <svg className="mt-[3px] h-[44px] w-[44px]" viewBox="0 0 44 44" fill="none" aria-hidden="true">
          <circle cx="22" cy="22" r="20" stroke="#5f9ff0" strokeWidth="2.400" strokeDasharray="10.100 5.600" strokeDashoffset="5" />
        </svg>
      </div>
      <div className="flex items-center pl-[48px]">
        <svg className="h-[42px] w-[66px]" viewBox="0 0 66 42" fill="#fff" aria-hidden="true">
          <rect y="25.500" width="11" height="16" rx="3.500" />
          <rect x="18" y="19" width="11" height="22.500" rx="3.500" />
          <rect x="36" y="10" width="11" height="31.500" rx="3.500" />
          <rect x="54" y="1" width="11" height="40.500" rx="3.500" />
        </svg>
        <svg className="ml-[22px] h-[42px] w-[58px]" viewBox="0 0 58 42" fill="#fff" aria-hidden="true">
          <path d="M29 0C40 0 50 4.500 57.500 11.500Q58.300 12.500 57.500 13.500L52 19Q51 20 50 19C44 13.500 37 10.500 29 10.500S14 13.500 8 19Q7 20 6 19L.5 13.500Q-.3 12.500 .5 11.500C8 4.500 18 0 29 0Z" />
          <path d="M29 14.500C36 14.500 42 17 47.500 21.500Q48.500 22.500 47.500 23.500L42 29Q41 29.800 40 29C37 26.500 33 25 29 25S21 26.500 18 29Q17 29.800 16 29L10.500 23.500Q9.500 22.500 10.500 21.500C16 17 22 14.500 29 14.500Z" />
          <path d="M29 28.500C32.500 28.500 35.500 29.500 38 31.500Q39 32.500 38 33.500L30 41.300Q29 42 28 41.300L20 33.500Q19 32.500 20 31.500C22.500 29.500 25.500 28.500 29 28.500Z" />
        </svg>
        <div className="ml-[22px] flex h-[45px] w-[85px] items-center justify-center rounded-[14px] bg-[linear-gradient(to_right,#65c466_35%,#636266_35%)] pl-[2px]">
          <span className="text-[41px] leading-none font-bold tracking-[0.3px]">35</span>
          <svg className="h-[31px] w-[20px]" viewBox="0 0 20 31" fill="#fff" aria-hidden="true">
            <path d="M14 0L0 16.500Q-.3 17.500 1 17.500H8L5 31L19.500 13.500Q20 12.500 18.800 12.500H11.500Z" />
          </svg>
        </div>
        <div className="ml-[3px] h-[15px] w-[5px] rounded-r-full bg-[#636266]" />
      </div>
    </div>
  );
}

function ChatHeader() {
  return (
    <div className="grid h-[117px] grid-cols-[1fr_auto_1fr] items-start">
      <div className="flex items-center gap-[11px] pt-[19px] pl-[23px]">
        <svg className="h-[64px] w-[38px]" viewBox="0 0 38 64" fill="none" stroke="#5188f0" strokeWidth="7.500" strokeLinecap="round" strokeLinejoin="round" aria-hidden="true">
          <path d="M33.500 4.500L5 32L33.500 59.500" />
        </svg>
        <span className="flex h-[54px] w-[132px] items-center justify-center rounded-full bg-[#5188f0] text-[39px] leading-none tracking-[0.2px]">3299</span>
      </div>
      <div className="flex flex-col items-center pr-[4px]">
        <h1 className="text-[49px] leading-[56px] font-semibold">test</h1>
        <p className="text-[38px] leading-[48px] text-[#8a898d]">bot</p>
      </div>
      <div className="mt-[-3px] mr-[18px] flex h-[112px] w-[111px] items-center justify-center justify-self-end rounded-full bg-linear-to-b from-[#8bd2fb] to-[#4b98e8]">
        <svg className="h-[35px] w-[28px]" viewBox="0 0 28 35" fill="none" stroke="#fff" strokeWidth="6.500" strokeLinecap="round" aria-label="T">
          <path d="M3.500 3.500H24.500M14 3.500V31.500" />
        </svg>
      </div>
    </div>
  );
}

/* ---------- messages ---------- */

function Link({ children }: { children: ReactNode }) {
  return <span className="text-[#5188f0]">{children}</span>;
}

function Time() {
  return <time className="text-[33px] leading-[40px] tracking-[0.15px] text-[#949096]">8:46 PM</time>;
}

function Bullet() {
  return <span className="inline-block w-[33px] pl-[3px] text-[34px] leading-none">•</span>;
}

function KeyButton({ icon, label, className }: { icon: ReactNode; label: string; className: string }) {
  return (
    <button className={`flex h-[126px] flex-1 items-center justify-center gap-[18px] pb-1 text-[47px] leading-none font-medium ${className}`}>
      {icon}
      <span className="pb-[2px]">{label}</span>
    </button>
  );
}

const Blank = () => <p className="h-[68.150px]" />;

function HelpMessage() {
  return (
    <section className="flex h-[261px] w-[1122px] flex-col overflow-hidden rounded-b-[27px] bg-[linear-gradient(100deg,#1a2633_0%,#232433_38%,#271f34_75%,#261e33_100%)] pr-[32px] pl-[31px]">
      <div className="-mt-[4px] text-[49px] leading-[68.150px] whitespace-nowrap">
        <p className="tracking-[-0.56px]"><Bullet /><Link>/pay</Link> <Link>@user</Link> amount TOKEN - Send payment</p>
        <p className="tracking-[-0.3px]"><Bullet /><Link>/split</Link> 100 USDC <Link>@user1</Link> <Link>@user2</Link> - Split bills</p>
        <p className="tracking-[-0.73px]"><Bullet /><Link>/giveaway</Link> start - Create group giveaways</p>
      </div>
      <div className="mt-[6px] flex justify-end"><Time /></div>
    </section>
  );
}

function HelpKeyboard() {
  return (
    <div className="mt-[6px] -ml-[3px] flex w-[1128px] flex-col gap-[6px]">
      <div className="flex gap-[6px]">
        <KeyButton icon={<MoneyWings />} label="Send" className="rounded-[27px] bg-linear-to-r from-[#28303b] to-[#2f2c38] pr-[4px]" />
        <KeyButton icon={<Phone />} label="Receive" className="rounded-[27px] bg-[#302b38]" />
      </div>
      <div className="flex gap-[6px]">
        <KeyButton icon={<Clipboard />} label="History" className="rounded-[27px] rounded-bl-[50px] bg-linear-to-r from-[#28303b] to-[#2f2c38] pl-[4px]" />
        <KeyButton icon={<Gear />} label="Settings" className="rounded-[27px] rounded-br-[50px] bg-[#302b38] pl-[2px]" />
      </div>
    </div>
  );
}

function OutgoingMessage() {
  return (
    <section className="relative mt-[20px] mr-[30px] flex h-[99px] w-[836px] items-start self-end rounded-[49px] bg-[#8d50de] pt-[13px] pl-[30px]">
      <svg className="absolute -right-[13px] bottom-0 h-[46px] w-[50px]" viewBox="0 0 50 46" fill="#8d50de" aria-hidden="true">
        <path d="M37 0V8C37 28 42 40 50 45Q32 47 19 36L8 20Z" />
      </svg>
      <p className="w-[603px] text-[49px] leading-[68px] tracking-[0.25px] whitespace-nowrap">
        <span className="tracking-[-0.85px] underline decoration-[3px] underline-offset-[5px] [text-decoration-skip-ink:none]">/pay</span>
        <span className="tracking-[-2px]">{' '}</span>
        <span className="tracking-[-0.75px] underline decoration-[3px] underline-offset-[5px] [text-decoration-skip-ink:none]">@usedefilink</span> 0.1 SOL
      </p>
      <time className="relative mt-[19px] ml-[-1px] text-[33px] leading-[40px] tracking-[0.2px] text-[#c7a7ef]">8:46 PM</time>
      <svg className="relative mt-[38px] ml-[5px] h-[26px] w-[44px]" viewBox="0 0 44 26" fill="none" stroke="#f4edfd" strokeWidth="3" strokeLinecap="round" strokeLinejoin="round" aria-hidden="true">
        <path d="M2 15L11 24L30 2M20.500 22L22.500 24L42 2" />
      </svg>
    </section>
  );
}

function ConfirmMessage() {
  return (
    <>
      <section className="mt-[20px] h-[849px] w-[924px] rounded-t-[50px] rounded-b-[27px] bg-[radial-gradient(ellipse_75%_65%_at_40%_100%,#342724_0%,#34272400_100%),linear-gradient(105deg,#1f2734_0%,#252532_35%,#292131_65%,#302233_100%)] pt-[14px] pr-[32px] pl-[31px] text-[49px] leading-[68.150px] whitespace-nowrap">
        <div className="flex h-[68.150px] items-center">
          <span className="w-[81px] pl-[2px]"><MoneyWings /></span>
          <p className="tracking-[-0.58px]">Confirm Payment</p>
        </div>
        <Blank />
        <p className="tracking-[-0.8px]">To: <Link>@usedefilink</Link></p>
        <p>Amount: 0.1 SOL</p>
        <Blank />
        <p className="tracking-[-0.43px]">Network Fee: 0.0005 SOL</p>
        <p className="tracking-[-0.62px]">Service Fee: We will take a 0.25% fee</p>
        <p className="tracking-[-0.24px]">(0.000250 SOL) in SOL.</p>
        <Blank />
        <p>Total: 0.10075 SOL</p>
        <Blank />
        <div className="flex justify-between">
          <p className="tracking-[-0.41px]">Proceed with payment?</p>
          <div className="flex pt-[30px] leading-none"><Time /></div>
        </div>
      </section>
      <div className="mt-[6px] -ml-[3px] flex w-[930px] gap-[6px]">
        <KeyButton icon={<CheckBox />} label="Send Payment" className="rounded-[27px] rounded-bl-[50px] bg-[#393130] pr-[4px] tracking-[-0.4px]" />
        <KeyButton icon={<CrossMark />} label="Cancel" className="rounded-[27px] rounded-br-[50px] bg-linear-to-r from-[#393030] to-[#3b2f38] pr-[4px] tracking-[-0.4px]" />
      </div>
    </>
  );
}

function SentMessage() {
  return (
    <section className="relative mt-[20px] h-[576px] w-[651px] rounded-[50px] bg-[linear-gradient(75deg,#32281f_0%,#332723_45%,#34262a_100%)] pt-[13px] pr-[32px] pl-[31px] text-[49px] leading-[68.150px] whitespace-nowrap">
      <svg className="absolute bottom-0 -left-[14px] h-[46px] w-[50px]" viewBox="0 0 50 46" fill="#322822" aria-hidden="true">
        <path d="M14 0V8C14 28 9 40 0 45Q18 47 33 37L42 20Z" />
      </svg>
      <div className="flex h-[68.150px] items-center">
        <span className="w-[81px] pl-[2px]"><CheckBox /></span>
        <p className="tracking-[-0.35px]">Payment Sent</p>
      </div>
      <Blank />
      <p className="tracking-[-0.4px]">From: <Link>@vi100x</Link></p>
      <p className="tracking-[-0.75px]">To: <Link>@useDefiLink</Link></p>
      <p>Amount: 0.1 SOL</p>
      <p className="tracking-[-0.43px]">Network Fee: 0.0005 SOL</p>
      <Blank />
      <div className="relative flex justify-between">
        <p className="tracking-[-0.58px]"><Link>View Transaction</Link></p>
        <div className="flex pt-[30px] leading-none"><Time /></div>
      </div>
    </section>
  );
}

/* ---------- composer ---------- */

function Composer() {
  return (
    <footer className="flex h-[237px] flex-col items-center justify-between border-t-2 border-[#363536] bg-[linear-gradient(95deg,#1d1d1b_0%,#211d1a_25%,#201b1c_60%,#1f1a20_100%)] pb-[24px]">
      <div className="flex w-full items-center pt-4 pl-[30px]">
        <button className="flex h-[99px] w-[264px] items-center gap-[24px] rounded-full bg-[#5188f0] pb-[3px] pl-[36px]">
          <svg className="h-[36px] w-[44px]" viewBox="0 0 44 36" stroke="#fff" strokeWidth="4.500" strokeLinecap="round" aria-hidden="true">
            <path d="M2 3H42M2 18H42M2 33H42" />
          </svg>
          <span className="text-[47px] leading-none font-medium tracking-[-0.9px]">Menu</span>
        </button>
        <svg className="ml-[31px] h-[74px] w-[64px]" viewBox="0 0 64 74" fill="none" stroke="#858486" strokeWidth="4.800" strokeLinecap="round" strokeLinejoin="round" aria-hidden="true">
          <path d="M37 24L18.500 47C13 56 24 63.500 31 55L55 25C66 8 47 -5 35 9L10 39C-5 60 18 79 33 65L59 45.500" />
        </svg>
        <div className="ml-[32px] flex h-[97px] w-[742px] items-center justify-between rounded-full bg-[#060606] pr-[25px] pl-[39px]">
          <span className="pb-[3px] text-[49px] leading-none tracking-[-0.85px] text-[#7b7a7c]">Message</span>
          <svg className="h-[60px] w-[58px]" viewBox="0 0 58 60" fill="none" stroke="#7d7c7e" strokeWidth="4.600" strokeLinejoin="round" strokeLinecap="round" aria-hidden="true">
            <path d="M23 3C9 6 2.500 17 2.500 30C2.500 46 14 57.500 29 57.500S55.500 47 55.500 34Q55.500 32 53 29L29 5Q26 2.500 23 3ZM23 3C22 23 31 37 54 36" />
          </svg>
        </div>
        <svg className="ml-[35px] h-[76px] w-[56px]" viewBox="0 0 56 76" fill="none" stroke="#858486" strokeWidth="4.600" strokeLinecap="round" aria-hidden="true">
          <rect x="14" y="3" width="28" height="47" rx="14" />
          <path d="M2.500 34.500V37C2.500 51 14 62 28 62S53.500 51 53.500 37V34.500M28 62V73.500" />
        </svg>
      </div>
      <div className="h-[15px] w-[462px] rounded-full bg-white" />
    </footer>
  );
}

export default function App() {
  return (
    <div className="flex h-[2796px] w-[1290px] flex-col overflow-hidden bg-black font-['Inter',sans-serif] text-white">
      <header className="h-[296px] border-b-2 border-[#3a393d] bg-[linear-gradient(100deg,#1b2023_0%,#1e2025_30%,#1f1d23_60%,#1c191e_100%)]">
        <StatusBar />
        <ChatHeader />
      </header>
      <main className="relative h-[2263px] overflow-hidden">
        <Wallpaper />
        <div className="relative flex flex-col items-start pl-[30px]">
          <HelpMessage />
          <HelpKeyboard />
          <OutgoingMessage />
          <ConfirmMessage />
          <SentMessage />
        </div>
      </main>
      <Composer />
    </div>
  );
}
